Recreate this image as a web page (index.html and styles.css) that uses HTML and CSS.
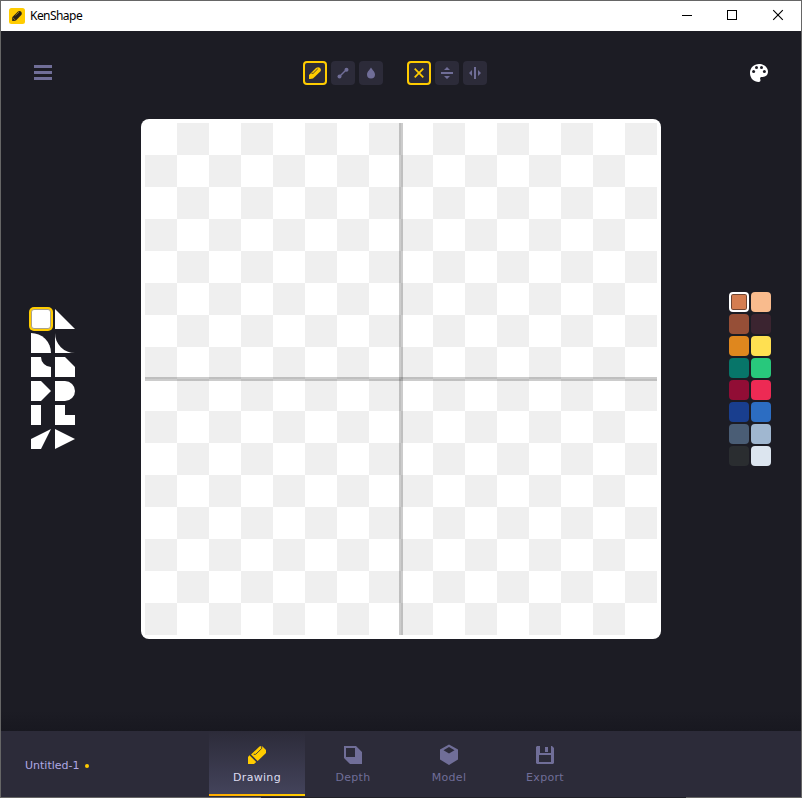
FILE: index.html
```html
<!DOCTYPE html>
<html lang="en">
<head>
<meta charset="utf-8">
<title>KenShape</title>
<link rel="stylesheet" href="styles.css">
</head>
<body>
<div class="window">
  <header class="titlebar">
    <svg class="app-icon" width="16" height="16" viewBox="0 0 16 16"><rect width="16" height="16" rx="2.5" fill="#fc0"/><path d="M3.2 13V9.3L9 3.5Q10.6 2.4 12 3.6Q13.4 5 12.5 6.8L6.7 12.7Z" fill="#29241b"/><path d="M6.5 7.4 10 4M3.6 9.5 6.7 12.5" stroke="#a98912" stroke-width=".8"/></svg>
    <span class="app-name">KenShape</span>
    <div class="controls">
      <svg width="46" height="30" viewBox="0 0 46 30"><path d="M18 14.5h10" stroke="#000"/></svg>
      <svg width="46" height="30" viewBox="0 0 46 30"><rect x="17.5" y="9.5" width="9" height="9" fill="none" stroke="#000"/></svg>
      <svg width="46" height="30" viewBox="0 0 46 30"><path d="M17.2 9.200l9.600 9.600M26.800 9.200l-9.600 9.600" stroke="#000" stroke-width="1.150"/></svg>
    </div>
  </header>

  <main class="workspace">
    <div class="topbar">
      <svg class="menu" width="18" height="15" viewBox="0 0 18 15" fill="#706e98"><path d="M0 0h18v3H0zM0 6h18v3H0zM0 12h18v3H0z"/></svg>
      <div class="tools">
        <div class="group">
          <div class="tool active"><svg width="24" height="24" viewBox="0 0 24 24"><path d="M6 18v-4l7-7q2-1.200 3.800-.3 1.600 1.300 1 3.300L10 17.600q-2 .6-4 .4z" fill="#fc0"/><path d="M8.500 12.300h1.700l4.600-4.500" stroke="#2c2b39" stroke-width=".8" fill="none"/></svg></div>
          <div class="tool"><svg width="24" height="24" viewBox="0 0 24 24"><path d="M8.500 15.500l7-7" stroke="#706e98" stroke-width="1.500"/><circle cx="8.500" cy="15.500" r="2" fill="#706e98"/><circle cx="15.500" cy="8.800" r="2" fill="#706e98"/></svg></div>
          <div class="tool"><svg width="24" height="24" viewBox="0 0 24 24"><path d="M12 6.500c1 2.200 4 4 4 7a4 4 0 0 1-8 0c0-3 3-4.800 4-7z" fill="#706e98"/></svg></div>
        </div>
        <div class="group">
          <div class="tool active"><svg width="24" height="24" viewBox="0 0 24 24"><path d="M7.700 7.700l8.600 8.600M16.300 7.700l-8.600 8.600" stroke="#fc0" stroke-width="1.700"/></svg></div>
          <div class="tool"><svg width="24" height="24" viewBox="0 0 24 24"><path d="M6 11h12v2H6zM12 6l3 3H9zM12 18l3-3H9z" fill="#706e98"/></svg></div>
          <div class="tool"><svg width="24" height="24" viewBox="0 0 24 24"><path d="M11 6h2v12h-2zM6 12l3-3v6zM18 12l-3-3v6z" fill="#706e98"/></svg></div>
        </div>
      </div>
      <svg class="palette-icon" width="18" height="18" viewBox="0 0 18 18"><path d="M9 0C14.200 0 18 3.300 18 7.600C18 11 15.800 13 12.700 13H11.200Q9.700 13.300 10.200 15Q11.200 18 8.800 18C3.800 18 0 14.200 0 9S4 0 9 0z" fill="#fff"/><g fill="#1c1c24"><circle cx="3.600" cy="7.500" r="1.500"/><circle cx="6.500" cy="3.600" r="1.500"/><circle cx="11.500" cy="3.600" r="1.500"/><circle cx="14.400" cy="7.500" r="1.500"/></g></svg>
    </div>

    <div class="stage">
      <div class="shapes">
        <div class="shape selected"></div>
        <svg class="shape" viewBox="0 0 20 20"><path d="M0 0l20 20H0z"/></svg>
        <svg class="shape" viewBox="0 0 20 20"><path d="M0 0a20 20 0 0 1 20 20H0z"/></svg>
        <svg class="shape" viewBox="0 0 20 20"><path d="M0 0a20 20 0 0 0 20 20H0z"/></svg>
        <svg class="shape" viewBox="0 0 20 20"><path d="M0 0h10a10 10 0 0 0 10 10v10H0z"/></svg>
        <svg class="shape" viewBox="0 0 20 20"><path d="M0 0h10l10 10v10H0z"/></svg>
        <svg class="shape" viewBox="0 0 20 20"><path d="M0 0h10l10 10-10 10H0z"/></svg>
        <svg class="shape" viewBox="0 0 20 20"><path d="M0 0h10a10 10 0 0 1 0 20H0z"/></svg>
        <svg class="shape" viewBox="0 0 20 20"><path d="M0 0h10v20H0z"/></svg>
        <svg class="shape" viewBox="0 0 20 20"><path d="M0 0h10v10h10v10H0z"/></svg>
        <svg class="shape" viewBox="0 0 20 20"><path d="M20 0L10 20H0V10z"/></svg>
        <svg class="shape" viewBox="0 0 20 20"><path d="M0 0l20 10L0 20z"/></svg>
      </div>

      <div class="canvas"><div class="checker"></div></div>

      <div class="swatches">
        <div class="swatch terracotta selected"></div><div class="swatch peach"></div>
        <div class="swatch brown"></div><div class="swatch plum"></div>
        <div class="swatch orange"></div><div class="swatch yellow"></div>
        <div class="swatch teal"></div><div class="swatch green"></div>
        <div class="swatch wine"></div><div class="swatch red"></div>
        <div class="swatch navy"></div><div class="swatch blue"></div>
        <div class="swatch slate"></div><div class="swatch steel"></div>
        <div class="swatch charcoal"></div><div class="swatch mist"></div>
      </div>
    </div>
  </main>

  <footer class="bottombar">
    <div class="document"><span>Untitled-1</span><i class="dot"></i></div>
    <nav class="tabs">
      <div class="tab active">
        <svg width="20" height="20" viewBox="0 0 20 20"><path d="M1 19v-7l1.500-1.700 6.700 6.700L7 19zM4 9.500L12.500 1.500Q13.500.7 15 1L19 5v3l-8.300 8z" fill="#fc0"/><path d="M6.700 9.300h2l6-5.800V.8" fill="none" stroke="#343448" stroke-width=".9"/></svg>
        <span>Drawing</span>
      </div>
      <div class="tab">
        <svg width="20" height="20" viewBox="0 0 20 20"><path d="M1 1h12l6 6v12H7l-6-6zM3 3v9h9V3z" fill="#706e98" fill-rule="evenodd"/></svg>
        <span>Depth</span>
      </div>
      <div class="tab">
        <svg width="20" height="20" viewBox="0 0 20 20"><path d="M10-.5l9 5v10l-9 5.500-9-5.500v-10zM10 2L4.500 5.200 10 8.500l5.500-3.300z" fill="#706e98" fill-rule="evenodd"/></svg>
        <span>Model</span>
      </div>
      <div class="tab">
        <svg width="20" height="20" viewBox="0 0 20 20"><path d="M2 1h3v7h11V1h1l2 2v15l-1 1H2l-1-1V2zM10 2h3v5h-3zM4 10v7h12v-7z" fill="#706e98" fill-rule="evenodd"/></svg>
        <span>Export</span>
      </div>
    </nav>
  </footer>
  <div class="edge"></div>
</div>
</body>
</html>
```
FILE: styles.css
```css
* { box-sizing: border-box; }

body {
  margin: 0;
  background: #1c1c24;
}

svg { display: block; overflow: visible; }

.window {
  width: 802px;
  height: 798px;
  border: 1px solid #666;
  border-bottom: 0;
  display: grid;
  grid-template-rows: 30px 700px 66px 1px;
  background: #1c1c24;
}

.titlebar {
  display: flex;
  align-items: center;
  padding-left: 8px;
  background: #fff;
}

.app-icon { margin-right: 5px; }

.app-name {
  font: 12px/16px "Noto Sans", sans-serif;
  letter-spacing: -0.55px;
  color: #000;
}

.controls { display: flex; margin: 0 -1px 0 auto; }

.workspace {
  display: grid;
  grid-template-rows: 88px 520px;
  background: linear-gradient(#1c1c24 680px, #181820);
}

.topbar {
  display: grid;
  grid-template-columns: 1fr 184px 1fr;
  align-items: center;
  height: 24px;
  margin-top: 30px;
  padding: 0 33px;
}

.menu { margin-top: -1px; }
.palette-icon { justify-self: end; }

.tools { display: flex; gap: 24px; margin: 0 12px 0 -6px; }
.group { display: flex; gap: 4px; }

.tool {
  width: 24px;
  height: 24px;
  border-radius: 4px;
  background: #2c2b39;
}

.tool.active { box-shadow: inset 0 0 0 2px #fc0; }

.stage {
  display: flex;
  align-items: center;
  justify-content: space-between;
  padding: 0 30px;
}

.shapes {
  display: grid;
  grid-template-columns: 20px 20px;
  grid-auto-rows: 20px;
  gap: 4px;
  margin-right: -2px;
}

.shape { width: 20px; height: 20px; fill: #fff; }

.shape.selected {
  background: #fff;
  border: 1px solid #a9a18c;
  border-radius: 3px;
  box-shadow: 0 0 0 2px #fc0;
}

.canvas {
  width: 520px;
  height: 520px;
  padding: 4px;
  border-radius: 8px;
  background: #fff;
}

.checker {
  height: 512px;
  background:
    linear-gradient(rgba(0, 0, 0, .2), rgba(0, 0, 0, .2)) 254px 0 / 4px 512px no-repeat,
    linear-gradient(rgba(0, 0, 0, .2), rgba(0, 0, 0, .2)) 0 254px / 512px 4px no-repeat,
    repeating-conic-gradient(#efefef 0 25%, #fff 0 50%) 0 0 / 64px 64px;
}

.swatches {
  display: grid;
  grid-template-columns: 20px 20px;
  grid-auto-rows: 20px;
  gap: 2px;
}

.swatch { border-radius: 4px; }
.swatch.selected {
  border: 2px solid #fff;
  box-shadow: inset 0 0 0 1px #6f4533;
}

.terracotta { background: #d47d51; }
.peach { background: #f9bb8d; }
.brown { background: #964f37; }
.plum { background: #3b2430; }
.orange { background: #df871e; }
.yellow { background: #ffe051; }
.teal { background: #077569; }
.green { background: #28c87c; }
.wine { background: #910d35; }
.red { background: #ed2a54; }
.navy { background: #193e8e; }
.blue { background: #2c6dc2; }
.slate { background: #4a5d75; }
.steel { background: #a0b7d0; }
.charcoal { background: #2a2d30; }
.mist { background: #dce5ef; }

.bottombar {
  display: grid;
  grid-template-columns: 208px auto;
  background: #2c2b39;
  font: 11px/14px "DejaVu Sans", sans-serif;
}

.document {
  display: flex;
  align-items: center;
  padding: 4px 0 0 24px;
  color: #afa8e4;
}

.dot {
  width: 4px;
  height: 4px;
  margin-left: 6px;
  border-radius: 50%;
  background: #fc0;
}

.tabs { display: flex; }

.tab {
  width: 96px;
  height: 65px;
  padding-top: 14px;
  display: flex;
  flex-direction: column;
  align-items: center;
  gap: 6px;
  color: #706e98;
  letter-spacing: .3px;
}

.tab.active {
  color: #dddcf0;
  background: linear-gradient(90deg, #ffab00, #fc0) 0 100% / 100% 2px no-repeat, linear-gradient(#2c2b39, #44445c);
}

.edge {
  background: linear-gradient(90deg, #666 260px, #202027 260px 685px, #666 685px);
}
```
